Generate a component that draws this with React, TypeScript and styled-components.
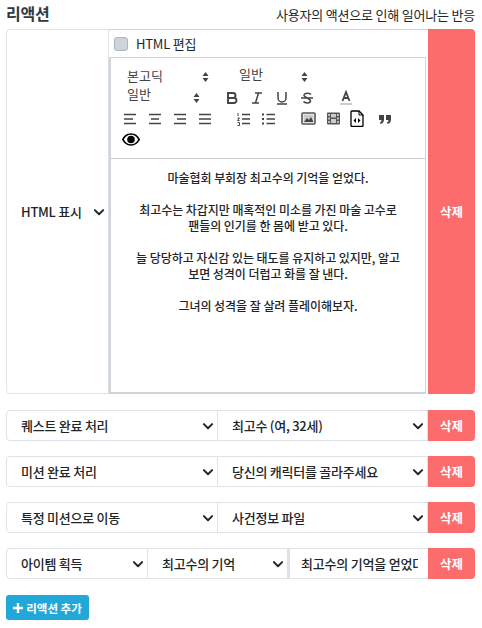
import React from "react";
import styled, { createGlobalStyle } from "styled-components";

const Global = createGlobalStyle`
  html, body { margin: 0; padding: 0; background: #fff; }
  body { font-family: "Noto Sans CJK KR", "Noto Sans", sans-serif; color: #212529; }
  * { box-sizing: border-box; }
`;

const Page = styled.div`
  width: 482px;
  height: 628px;
  padding: 0 7px 0 6px;
  overflow: hidden;
`;
const Header = styled.div`
  height: 29px;
  display: flex;
  justify-content: space-between;
  align-items: center;
`;
const Title = styled.div`
  font-size: 16px;
  font-weight: 700;
  color: #343a40;
  margin-bottom: 3px;
  letter-spacing: -0.2px;
`;
const Hint = styled.div`
  font-size: 13px;
  color: #212529;
  letter-spacing: -0.2px;
`;
const Row = styled.div<{ $height?: number; $gap?: number }>`
  display: flex;
  height: ${(p) => p.$height ?? 31}px;
  margin-bottom: ${(p) => p.$gap ?? 15}px;
`;
const Select = styled.div<{ $width?: number; $first?: boolean }>`
  ${(p) => (p.$width ? `width: ${p.$width}px; flex: none;` : "flex: 1 1 0; min-width: 0;")}
  display: flex;
  align-items: center;
  justify-content: space-between;
  padding: 0 3px 0 ${(p) => (p.$first ? 14 : 14)}px;
  border: 1px solid #dee2e6;
  border-left-width: ${(p) => (p.$first ? 1 : 0)}px;
  border-radius: ${(p) => (p.$first ? "4px 0 0 4px" : "0")};
  font-size: 13px;
  font-weight: 500;
  letter-spacing: -0.25px;
  color: #212529;
  white-space: nowrap;
  overflow: hidden;
`;
const InputCell = styled.div`
  width: 140px;
  flex: none;
  display: flex;
  align-items: center;
  padding: 0 10px 0 11px;
  border: 1px solid #dee2e6;
  border-left-width: 2px;
  border-right: 0;
  font-size: 13px;
  font-weight: 500;
  letter-spacing: -0.2px;
`;
const InputText = styled.span`
  display: block;
  width: 100%;
  white-space: nowrap;
  overflow: hidden;
`;
const DeleteButton = styled.button`
  width: 47px;
  flex: none;
  border: 0;
  padding: 0;
  border-radius: 0 4px 4px 0;
  background: #fc6c6c;
  color: #fff;
  font-family: inherit;
  font-size: 12.5px;
  font-weight: 700;
`;
const EditorColumn = styled.div`
  width: 319px;
  flex: none;
  display: flex;
  flex-direction: column;
  border-top: 1px solid #ced4da;
`;
const CheckRow = styled.div`
  height: 27px;
  flex: none;
  display: flex;
  align-items: center;
  gap: 8px;
  padding-left: 5px;
  font-size: 13px;
  letter-spacing: -0.2px;
  color: #212529;
`;
const Checkbox = styled.span`
  width: 14px;
  height: 14px;
  border-radius: 3px;
  background: #ced4da;
  border: 1px solid #adb5bd;
`;
const Editor = styled.div`
  flex: 1;
  margin-right: 2px;
  display: flex;
  flex-direction: column;
  border: 1px solid #ced4da;
  border-left: 2px solid #ced4da;
  border-bottom: 2px solid #ced4da;
  min-height: 0;
`;
const Toolbar = styled.div`
  height: 101px;
  flex: none;
  padding: 8px 0 0 11px;
  border-bottom: 1px solid #ccc;
`;
const ToolRow = styled.div`
  display: flex;
  align-items: center;
  height: 21px;
`;
const Picker = styled.div<{ $width: number }>`
  width: ${(p) => p.$width}px;
  flex: none;
  display: flex;
  align-items: center;
  justify-content: space-between;
  font-size: 13px;
  color: #444;
  padding-left: 5px;
`;
const PickerLabel = styled.span<{ $raise?: number }>`
  position: relative;
  top: ${(p) => -(p.$raise ?? 0)}px;
`;
const Tool = styled.span<{ $ml?: number }>`
  width: 16px;
  height: 16px;
  flex: none;
  margin-left: ${(p) => p.$ml ?? 9}px;
  display: inline-flex;
  align-items: center;
  justify-content: center;
  color: #444;
  svg { display: block; }
`;
const Content = styled.div`
  flex: 1;
  padding: 11px 14px;
  text-align: center;
  font-size: 12px;
  line-height: 16px;
  font-weight: 500;
  letter-spacing: -0.05px;
  color: #212529;
  white-space: nowrap;
`;
const AddButton = styled.button`
  width: 83px;
  height: 25px;
  display: flex;
  align-items: center;
  justify-content: center;
  gap: 3px;
  border: 0;
  padding: 0;
  border-radius: 3px;
  background: #22a8d8;
  color: #fff;
  font-family: inherit;
  font-size: 11.5px;
  font-weight: 700;
`;

const Chevron = () => (
  <svg width="12" height="12" viewBox="0 0 16 16" fill="none" stroke="#212529" strokeWidth="2.6" strokeLinecap="round" strokeLinejoin="round">
    <path d="M2.5 5.5 8 11l5.5-5.5" />
  </svg>
);
const Sort = () => (
  <svg width="7" height="12" viewBox="0 0 7 12" fill="#444">
    <path d="M3.5 1 6.5 5H.5zM3.5 11 .5 7h6z" />
  </svg>
);
const Stroke = ({ children }: { children: React.ReactNode }) => (
  <svg width="16" height="16" viewBox="0 0 16 16" fill="none" stroke="#444" strokeWidth="1.5">
    {children}
  </svg>
);
const Align = ({ d }: { d: string }) => (
  <Stroke>
    <path strokeWidth="1.7" d={d} />
  </Stroke>
);

export default function App() {
  return (
    <Page>
      <Global />
      <Header>
        <Title>리액션</Title>
        <Hint>사용자의 액션으로 인해 일어나는 반응</Hint>
      </Header>
      <Row $height={365} $gap={16}>
        <Select $width={103} $first>
          <span>HTML 표시</span>
          <Chevron />
        </Select>
        <EditorColumn>
          <CheckRow>
            <Checkbox />
            <span>HTML 편집</span>
          </CheckRow>
          <Editor>
            <Toolbar>
              <ToolRow>
                <Picker $width={87}>
                  <PickerLabel $raise={1}>본고딕</PickerLabel>
                  <Sort />
                </Picker>
                <Picker $width={74} style={{ marginLeft: 25 }}>
                  <PickerLabel $raise={3}>일반</PickerLabel>
                  <Sort />
                </Picker>
              </ToolRow>
              <ToolRow>
                <Picker $width={78}>
                  <PickerLabel $raise={4}>일반</PickerLabel>
                  <Sort />
                </Picker>
                <Tool $ml={24}>
                  <Stroke>
                    <path strokeWidth="1.9" d="M4 3h5a2.400 2.400 0 0 1 0 5H4zM4 8h6a2.500 2.500 0 0 1 0 5H4z" />
                  </Stroke>
                </Tool>
                <Tool>
                  <Stroke>
                    <path d="M6 3h7M3 13h7M9.500 3 6.500 13" />
                  </Stroke>
                </Tool>
                <Tool>
                  <Stroke>
                    <path d="M4 2v6a4 4 0 0 0 8 0V2M3 14h10" />
                  </Stroke>
                </Tool>
                <Tool>
                  <Stroke>
                    <path d="M12 4.500C11 3 6 2.500 5 5c-.8 2.500 6.500 3 6.500 6 0 2.500-5.500 2.500-7 .5M2 8h12" />
                  </Stroke>
                </Tool>
                <Tool $ml={23}>
                  <Stroke>
                    <path strokeWidth="1.800" d="m4.500 11 3.500-9 3.500 9M6 8h4" />
                    <path stroke="#ccc" strokeWidth="2" d="M2 14h12" />
                  </Stroke>
                </Tool>
              </ToolRow>
              <ToolRow>
                <Tool $ml={0}>
                  <Align d="M2 3.500h12M2 8h9M2 12.500h12" />
                </Tool>
                <Tool>
                  <Align d="M2 3.500h12M4 8h8M2 12.500h12" />
                </Tool>
                <Tool>
                  <Align d="M2 3.500h12M5 8h9M2 12.500h12" />
                </Tool>
                <Tool>
                  <Align d="M2 3.500h12M2 8h12M2 12.500h12" />
                </Tool>
                <Tool $ml={23}>
                  <Stroke>
                    <path d="M6 3.500h8M6 8h8M6 12.500h8" />
                    <path strokeWidth="1" d="M2 2v3M1.500 7h2l-2 2.500h2M1.500 11.500h2v3h-2" />
                  </Stroke>
                </Tool>
                <Tool>
                  <Stroke>
                    <path d="M5.500 3.500H14M5.500 8H14M5.500 12.500H14" />
                    <path strokeWidth="2" strokeDasharray="2 2.500" d="M2 2.500v12" />
                  </Stroke>
                </Tool>
                <Tool $ml={23}>
                  <svg width="15" height="15" viewBox="0 0 15 15">
                    <rect x="1" y="2" width="13" height="11" rx="1" fill="none" stroke="#555" strokeWidth="1.600" />
                    <rect x="2.500" y="3.500" width="10" height="8" fill="#ccc" />
                    <path fill="#444" d="m3 11 3-4 2 2 2-3 2.500 5z" />
                  </svg>
                </Tool>
                <Tool>
                  <svg width="15" height="15" viewBox="0 0 15 15">
                    <rect x="1" y="1.500" width="13" height="12" rx="1" fill="#555" />
                    <path fill="#ccc" d="M5 3h5v3.500H5zM5 8h5v4H5zM2.200 3H4v2H2.200zM11 3h1.800v2H11zM2.200 6.500H4v2H2.200zM11 6.500h1.800v2H11zM2.200 10H4v2H2.200zM11 10h1.800v2H11z" />
                  </svg>
                </Tool>
                <Tool $ml={8}>
                  <svg width="14" height="17" viewBox="0 0 14 17" fill="none">
                    <path d="M1 2a1 1 0 0 1 1-1h7l4 4v10.500a1 1 0 0 1-1 1H2a1 1 0 0 1-1-1z" stroke="#000" strokeWidth="1.300" />
                    <path d="M9 1v4h4" stroke="#000" strokeWidth="1" />
                    <path fill="#000" d="M6 8v5L3.500 10.500zM8 8v5l2.500-2.500z" />
                  </svg>
                </Tool>
                <Tool $ml={12}>
                  <svg width="14" height="14" viewBox="0 0 14 14" fill="#444">
                    <path d="M1 3h5v4.500C6 10 4.500 11.500 2.500 12l-.5-1.500C3 10 3.500 9.200 3.500 8H1zM8 3h5v4.500c0 2.500-1.500 4-3.500 4.500L9 10.500c1-.5 1.500-1.300 1.500-2.500H8z" />
                  </svg>
                </Tool>
              </ToolRow>
              <ToolRow>
                <Tool $ml={0} style={{ width: 18 }}>
                  <svg width="19" height="13" viewBox="0 0 19 13">
                    <path fillRule="evenodd" fill="#000" d="M9.500 0C5 0 1.500 3 0 6.500 1.500 10 5 13 9.500 13S17.500 10 19 6.500C17.500 3 14 0 9.500 0zM9.500 1.500c-3.500 0-6 2-7.500 5 1.500 3 4 5 7.500 5s6-2 7.500-5c-1.500-3-4-5-7.500-5z" />
                    <circle cx="9.500" cy="6.500" r="4" fill="#000" />
                  </svg>
                </Tool>
              </ToolRow>
            </Toolbar>
            <Content>
              마술협회 부회장 최고수의 기억을 얻었다.
              <br />
              <br />
              최고수는 차갑지만 매혹적인 미소를 가진 마술 고수로
              <br />
              팬들의 인기를 한 몸에 받고 있다.
              <br />
              <br />
              늘 당당하고 자신감 있는 태도를 유지하고 있지만, 알고
              <br />
              보면 성격이 더럽고 화를 잘 낸다.
              <br />
              <br />
              그녀의 성격을 잘 살려 플레이해보자.
            </Content>
          </Editor>
        </EditorColumn>
        <DeleteButton>삭제</DeleteButton>
      </Row>
      <Row>
        <Select $width={212} $first>
          <span>퀘스트 완료 처리</span>
          <Chevron />
        </Select>
        <Select>
          <span>최고수 (여, 32세)</span>
          <Chevron />
        </Select>
        <DeleteButton>삭제</DeleteButton>
      </Row>
      <Row>
        <Select $width={212} $first>
          <span>미션 완료 처리</span>
          <Chevron />
        </Select>
        <Select>
          <span>당신의 캐릭터를 골라주세요</span>
          <Chevron />
        </Select>
        <DeleteButton>삭제</DeleteButton>
      </Row>
      <Row>
        <Select $width={212} $first>
          <span>특정 미션으로 이동</span>
          <Chevron />
        </Select>
        <Select>
          <span>사건정보 파일</span>
          <Chevron />
        </Select>
        <DeleteButton>삭제</DeleteButton>
      </Row>
      <Row $gap={16}>
        <Select $width={142} $first>
          <span>아이템 획득</span>
          <Chevron />
        </Select>
        <Select>
          <span>최고수의 기억</span>
          <Chevron />
        </Select>
        <InputCell>
          <InputText>최고수의 기억을 얻었다</InputText>
        </InputCell>
        <DeleteButton>삭제</DeleteButton>
      </Row>
      <AddButton>
        <svg width="10" height="10" viewBox="0 0 10 10" fill="#fff">
          <path d="M3.800 0h2.400v3.800H10v2.400H6.200V10H3.800V6.200H0V3.800h3.800z" />
        </svg>
        리액션 추가
      </AddButton>
    </Page>
  );
}
